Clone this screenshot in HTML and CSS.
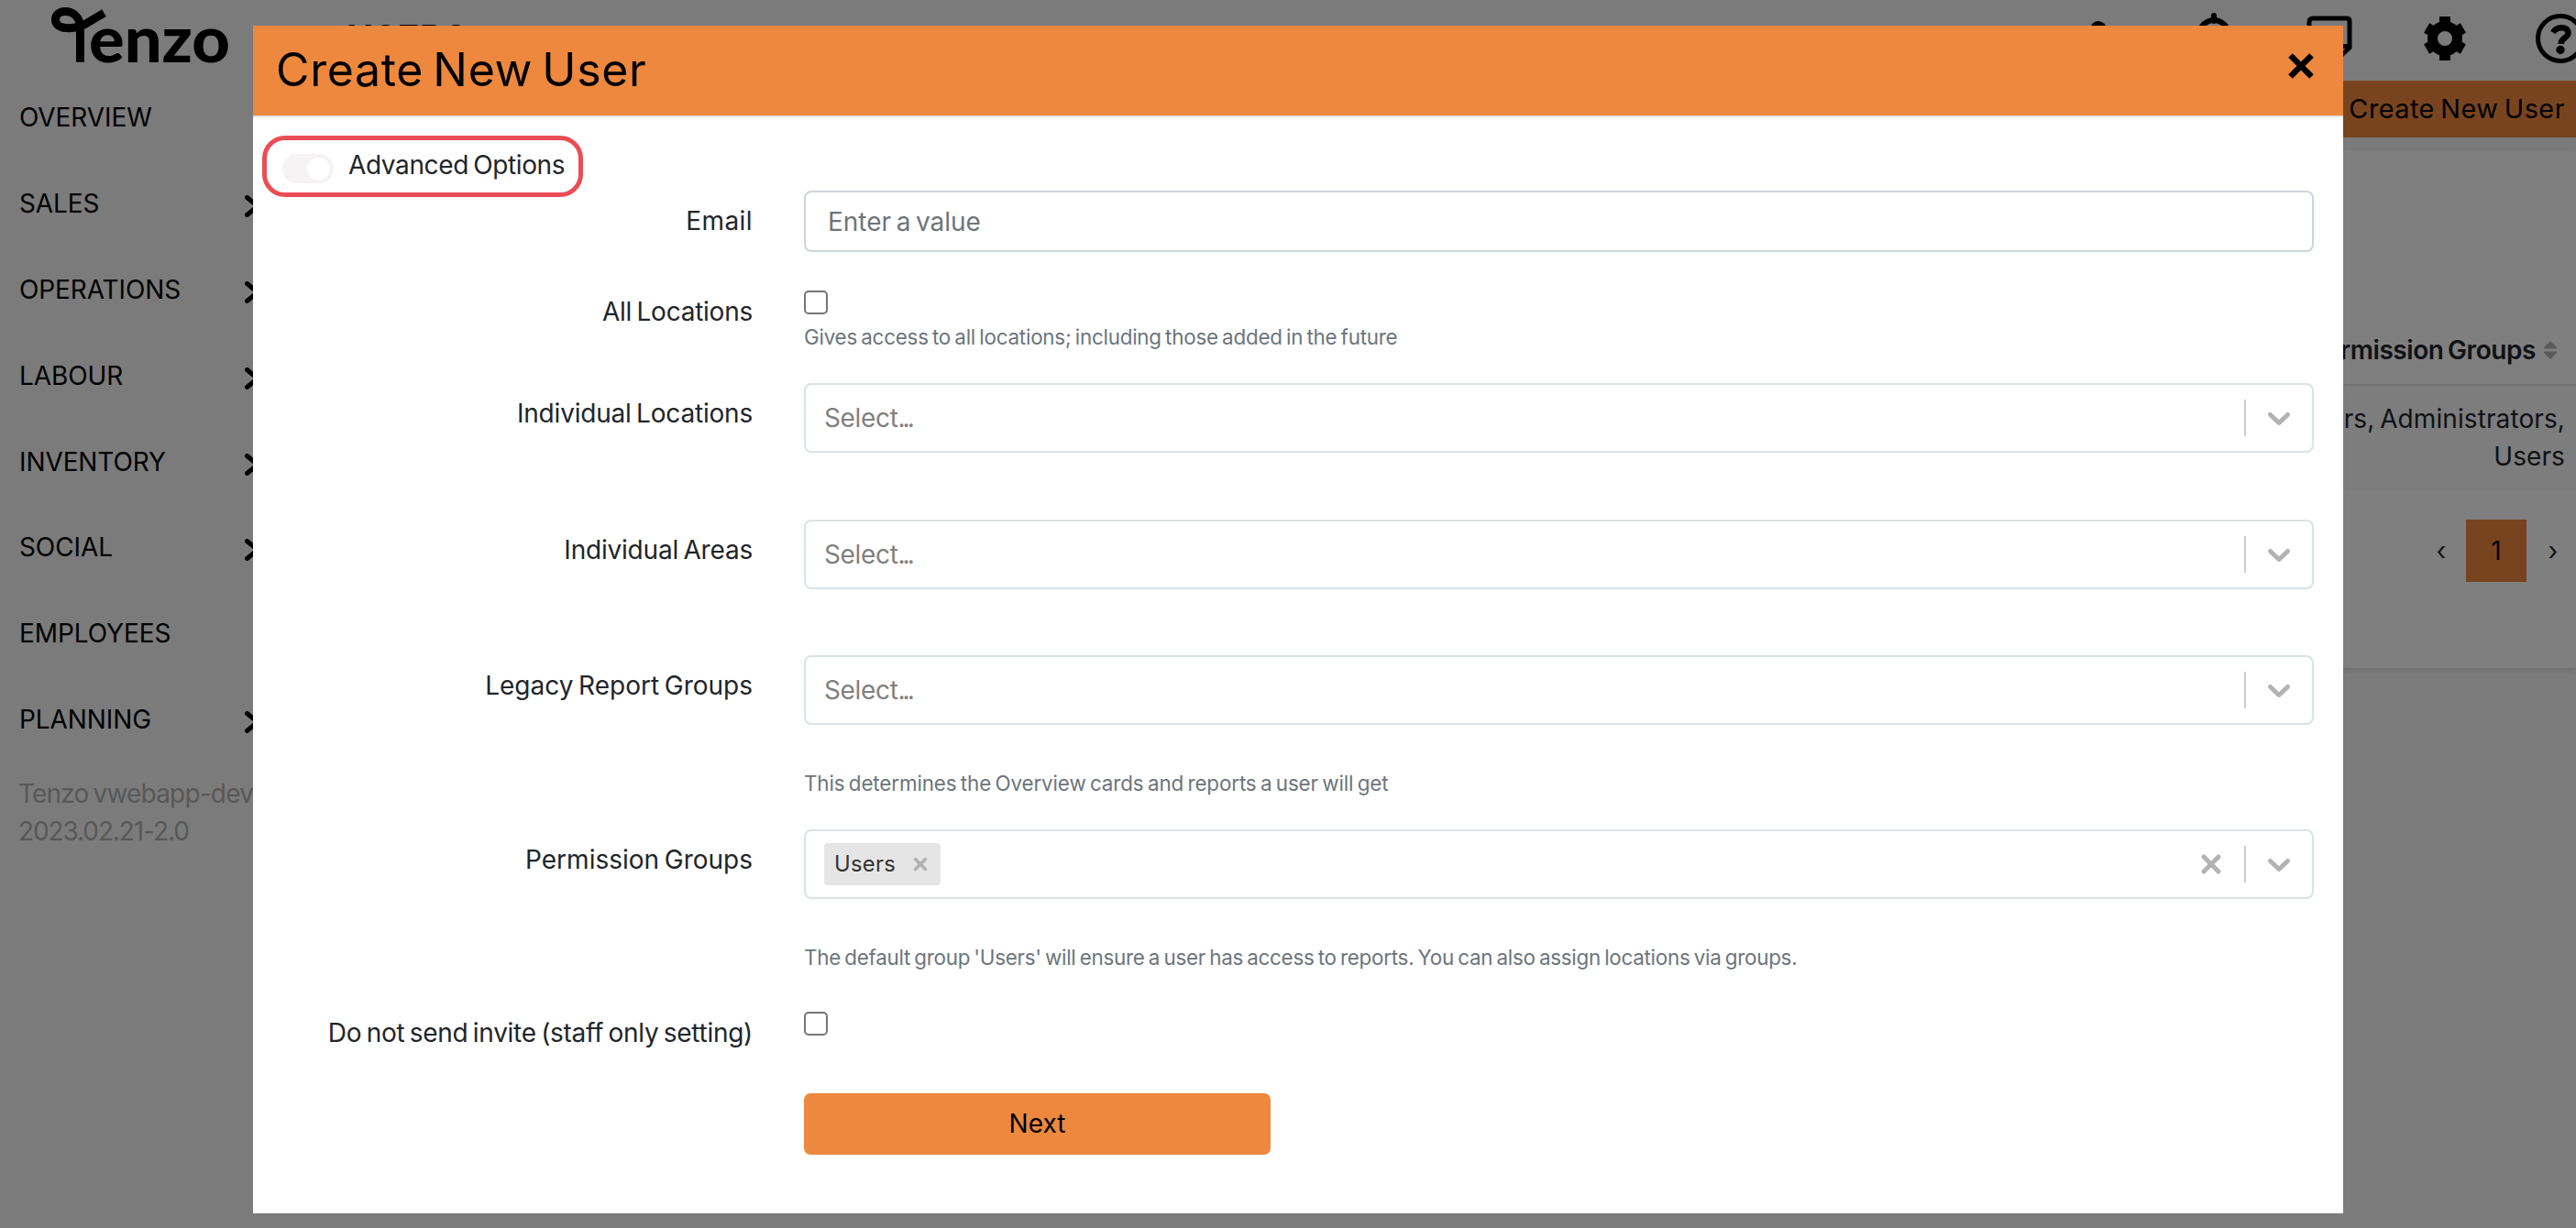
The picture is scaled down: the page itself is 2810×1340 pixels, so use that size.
FILE: index.html
```
<!DOCTYPE html>
<html lang="en">
<head>
<meta charset="utf-8">
<title>Tenzo – Create New User</title>
<link rel="stylesheet" href="styles.css">
</head>
<body>
<div class="app">
  <header class="topbar">
    <svg class="logo" width="264" height="88" viewBox="0 0 264 88">
      <path d="M113.5 14.2L92 26.8C84 31 76 30.8 72 30.5C64 30 60.5 26 60.5 21.5C60.5 16 65 12.5 71 12.5C80 12.5 87.5 19 87.5 30V67.7" fill="none" stroke="#000" stroke-width="9"/>
      <text x="97" y="67.5" textLength="154" lengthAdjust="spacingAndGlyphs">enzo</text>
    </svg>
    <h1 class="page-title">USERS</h1>
    <nav class="tools">
      <svg width="60" height="60" viewBox="0 0 60 60"><circle cx="30" cy="20" r="9"/><path d="M12 50c0-24 36-24 36 0z"/></svg>
      <svg width="60" height="60" viewBox="0 0 60 60"><path d="M30 5v6M14 44V26a16 16 0 0 1 32 0v18z" fill="none" stroke="#000" stroke-width="6" stroke-linecap="round"/></svg>
      <svg width="60" height="60" viewBox="0 0 60 60"><path d="M12 8h37q3 0 3 3v29L39 52H12q-4 0-4-4V12q0-4 4-4zM39 52V38.500h13" fill="none" stroke="#000" stroke-width="5"/></svg>
      <svg width="60" height="60" viewBox="0 0 60 60">
        <circle cx="30" cy="30" r="13.500" fill="none" stroke="#000" stroke-width="11"/>
        <g fill="none" stroke="#000" stroke-width="12"><path d="M30 6v9M30 45v9"/><path d="M30 7v8M30 45v8" transform="rotate(60 30 30)"/><path d="M30 7v8M30 45v8" transform="rotate(120 30 30)"/></g>
      </svg>
      <svg width="60" height="60" viewBox="0 0 60 60"><circle cx="30" cy="30" r="24.500" fill="none" stroke="#000" stroke-width="5"/><path d="M22 23.500C25 17.500 38 15.500 38.500 24C38.700 29 30.500 29.500 30.500 36" fill="none" stroke="#000" stroke-width="6.500"/><circle cx="30" cy="42.500" r="4.700"/></svg>
    </nav>
  </header>
  <div class="columns">
    <aside class="sidebar">
      <a class="nav">OVERVIEW</a>
      <a class="nav">SALES<svg class="more" viewBox="0 0 20 24"><path d="M2.500 2.500L14 12L2.500 21.500"/></svg></a>
      <a class="nav">OPERATIONS<svg class="more" viewBox="0 0 20 24"><path d="M2.500 2.500L14 12L2.500 21.500"/></svg></a>
      <a class="nav">LABOUR<svg class="more" viewBox="0 0 20 24"><path d="M2.500 2.500L14 12L2.500 21.500"/></svg></a>
      <a class="nav">INVENTORY<svg class="more" viewBox="0 0 20 24"><path d="M2.500 2.500L14 12L2.500 21.500"/></svg></a>
      <a class="nav">SOCIAL<svg class="more" viewBox="0 0 20 24"><path d="M2.500 2.500L14 12L2.500 21.500"/></svg></a>
      <a class="nav">EMPLOYEES</a>
      <a class="nav">PLANNING<svg class="more" viewBox="0 0 20 24"><path d="M2.500 2.500L14 12L2.500 21.500"/></svg></a>
      <p class="version">Tenzo vwebapp-dev<br><span class="build">2023.02.21-2.0</span></p>
    </aside>
    <main class="main">
      <a class="create">Create New User</a>
      <section class="panel">
        <div class="thead">Permission Groups
          <svg width="14" height="22" viewBox="0 0 14 22"><path d="M0 9.500V8L7 1l7 7v1.500zM0 12.500V14l7 7 7-7v-1.500z"/></svg>
        </div>
        <div class="trow">Users, Administrators,<br>Users</div>
        <div class="pager"><span class="step">‹</span><span class="current">1</span><span class="step step-next">›</span></div>
      </section>
    </main>
  </div>
</div>

<div class="overlay">
  <div class="modal">
    <header class="modal-head">
      <h2>Create New User</h2>
      <svg width="30" height="30" viewBox="0 0 30 30"><path d="M3.500 3.500l23 23M26.500 3.500l-23 23" stroke="#000" stroke-width="6.500"/></svg>
    </header>
    <div class="modal-body">
      <div class="advanced"><span class="toggle"><i></i></span><span class="advanced-text">Advanced Options</span></div>
      <form class="form">
        <div class="row row-email">
          <label class="l-email">Email</label>
          <div><div class="input">Enter a value</div></div>
        </div>
        <div class="row row-all">
          <label class="l-all">All Locations</label>
          <div><span class="check"></span><p class="help h-all">Gives access to all locations; including those added in the future</p></div>
        </div>
        <div class="row row-locations">
          <label class="l-ind">Individual Locations</label>
          <div><div class="select"><span class="placeholder">Select<b>...</b></span><span class="bar"></span><svg class="drop" viewBox="0 0 40 40"><path d="M10.500 16.500L20 25.500L29.500 16.500"/></svg></div></div>
        </div>
        <div class="row row-areas">
          <label class="l-ind">Individual Areas</label>
          <div><div class="select"><span class="placeholder">Select<b>...</b></span><span class="bar"></span><svg class="drop" viewBox="0 0 40 40"><path d="M10.500 16.500L20 25.500L29.500 16.500"/></svg></div></div>
        </div>
        <div class="row row-report">
          <label class="l-report">Legacy Report Groups</label>
          <div><div class="select"><span class="placeholder">Select<b>...</b></span><span class="bar"></span><svg class="drop" viewBox="0 0 40 40"><path d="M10.500 16.500L20 25.500L29.500 16.500"/></svg></div>
          <p class="help h-report">This determines the Overview cards and reports a user will get</p></div>
        </div>
        <div class="row row-permission">
          <label>Permission Groups</label>
          <div><div class="select"><span class="chip">Users<svg width="16" height="16" viewBox="0 0 16 16"><path d="M2.500 2.500l11 11M13.500 2.500l-11 11"/></svg></span><svg class="clear" viewBox="0 0 40 40"><path d="M12 12l16 16M28 12L12 28"/></svg><span class="bar"></span><svg class="drop" viewBox="0 0 40 40"><path d="M10.500 16.500L20 25.500L29.500 16.500"/></svg></div>
          <p class="help h-permission">The default group 'Users' will ensure a user has access to reports. You can also assign locations via groups.</p></div>
        </div>
        <div class="row row-invite">
          <label class="l-invite">Do not send invite (staff only setting)</label>
          <div><span class="check"></span></div>
        </div>
        <div class="row"><span></span><div class="next">Next</div></div>
      </form>
    </div>
  </div>
</div>
</body>
</html>
```
FILE: styles.css
```
* { box-sizing: border-box; }
body {
  margin: 0;
  width: 2810px;
  height: 1340px;
  overflow: hidden;
  font: 28px/42px Inter, "Liberation Sans", sans-serif;
  word-spacing: -2.2px;
  color: #212529;
  background: #f7f7f7;
}
h1, h2, p { margin: 0; font-weight: 400; }
svg { display: block; flex: none; }

/* page behind the dialog */
.app { display: flex; flex-direction: column; height: 1340px; overflow: hidden; }
.topbar { display: flex; height: 88px; flex: none; overflow: hidden; color: #000; }
.logo { overflow: visible; }
.logo text { font: 900 71px Lato, sans-serif; }
.page-title { margin-left: 114px; padding-top: 20px; font-size: 40px; font-weight: 700; line-height: 43px; width: 300px; flex: none; }
.tools { display: flex; gap: 66px; padding-top: 12px; margin-left: 1581px; flex: none; }
.columns { display: flex; flex: 1; min-height: 0; }
.sidebar { width: 300px; padding: 19px 0 0 21px; color: #000; flex: none; }
.nav { display: flex; justify-content: space-between; height: 93.9px; width: 266px; letter-spacing: -.1px; }
.more { width: 20px; height: 24px; margin-top: 12px; fill: none; stroke: #000; stroke-width: 5; stroke-linecap: round; }
.version { margin: -12px 0 0 -1px; line-height: 41px; color: #b0b0b0; white-space: nowrap; letter-spacing: -.8px; }
.build { letter-spacing: -1.1px; }
.main { flex: 1; display: flex; flex-direction: column; }
.create { align-self: flex-end; width: 330px; height: 62px; padding-right: 12px; font-size: 28.8px; line-height: 61px; letter-spacing: .5px; text-align: right; color: #000; background: #f0883e; }
.panel { margin-top: 14px; height: 565px; padding-top: 176px; background: #fff; box-shadow: 0 2px 6px rgba(0, 0, 0, .12); }
.thead { display: flex; justify-content: flex-end; align-items: center; gap: 9px; height: 81px; padding: 4px 21px 0 0; font-weight: 600; letter-spacing: -.42px; border-bottom: 2px solid #dee2e6; }
.thead svg { fill: #b4b4b4; }
.trow { height: 114px; padding: 16px 12px 0 0; line-height: 41px; letter-spacing: .1px; text-align: right; background: #fbfbfb; }
.pager { display: flex; justify-content: flex-end; margin-top: 32px; line-height: 69px; }
.step { width: 54px; text-align: center; }
.step-next { padding-left: 4px; }
.current { width: 66px; height: 68px; text-align: center; color: #000; background: #f0883e; }

/* dialog */
.overlay { position: fixed; inset: 0; padding: 28px 254px 16px 276px; background: rgba(0, 0, 0, .5); }
.modal { height: 1296px; background: #fff; }
.modal-head { display: flex; justify-content: space-between; height: 100px; padding: 0 31px 0 25px; background: #ed883e; border-bottom: 2px solid #dee2e6; color: #000; }
.modal-head h2 { font-size: 50px; line-height: 96px; letter-spacing: .65px; word-spacing: -4.5px; }
.modal-head svg { margin-top: 29px; }
.advanced { display: flex; width: 350px; height: 67px; margin: 20px 0 -7px 10px; padding-left: 17px; border: 5px solid #eb4d55; border-radius: 25px; }
.toggle { display: flex; justify-content: flex-end; align-items: center; width: 56px; height: 32px; margin-top: 15px; padding-right: 4px; border-radius: 16px; background: #f5f3f4; }
.toggle i { width: 25px; height: 25px; border-radius: 50%; background: #fff; }
.advanced-text { margin-left: 16px; padding-top: 6px; letter-spacing: -.38px; white-space: nowrap; }
.row { display: grid; grid-template-columns: 546px 1647px; column-gap: 55px; }
.row label { padding: 12px 1px 0 0; text-align: right; white-space: nowrap; letter-spacing: 0; }
.row-email { height: 99px; }
.row-all { height: 111px; }
.row-locations { height: 149px; }
.row-areas { height: 148px; }
.row-report { height: 190px; }
.row-permission { height: 189px; }
.row-invite { height: 99px; }
.row .l-email { letter-spacing: .4px; }
.row .l-all { letter-spacing: -.24px; }
.row .l-ind { letter-spacing: -.2px; }
.row .l-report { letter-spacing: 0; }
.row .l-invite { letter-spacing: -.28px; }
.input { height: 67px; padding-left: 24px; line-height: 65px; letter-spacing: -.02px; color: #6c757d; border: 2px solid #ced4da; border-radius: 8px; }
.check { display: block; width: 26px; height: 26px; margin: 10px 0 1px; border: 2px solid #767676; border-radius: 5px; }
.help { font-size: 22.4px; line-height: 34px; word-spacing: -1.8px; color: #6c757d; white-space: nowrap; }
.h-all { margin-top: 8px; letter-spacing: -.23px; }
.h-report { margin-top: 47px; letter-spacing: -.12px; }
.h-permission { margin-top: 47px; letter-spacing: -.26px; }
.select { display: flex; align-items: center; height: 76px; padding: 0 16px 0 20px; border: 2px solid #dae3e5; border-radius: 8px; }
.placeholder { margin-right: auto; color: #808080; letter-spacing: -.35px; }
.placeholder b { font-weight: 400; letter-spacing: -2.9px; }
.bar { width: 2px; height: 40px; background: #ccc; }
.drop, .clear { width: 40px; height: 40px; fill: none; stroke: #b3b3b3; stroke-width: 5; stroke-linecap: round; stroke-linejoin: round; }
.drop { margin-left: 16px; }
.clear { margin-right: 16px; }
.chip { display: flex; align-items: center; gap: 19px; width: 127px; height: 46px; margin-right: auto; padding-left: 11px; font-size: 23.8px; letter-spacing: .3px; color: #333; background: #e5e5e5; border-radius: 4px; }
.chip svg { fill: none; stroke: #b0b0b0; stroke-width: 3.5; stroke-linecap: round; }
.next { width: 509px; height: 67px; line-height: 67px; text-align: center; color: #000; background: #ed883e; border-radius: 7px; }
```
